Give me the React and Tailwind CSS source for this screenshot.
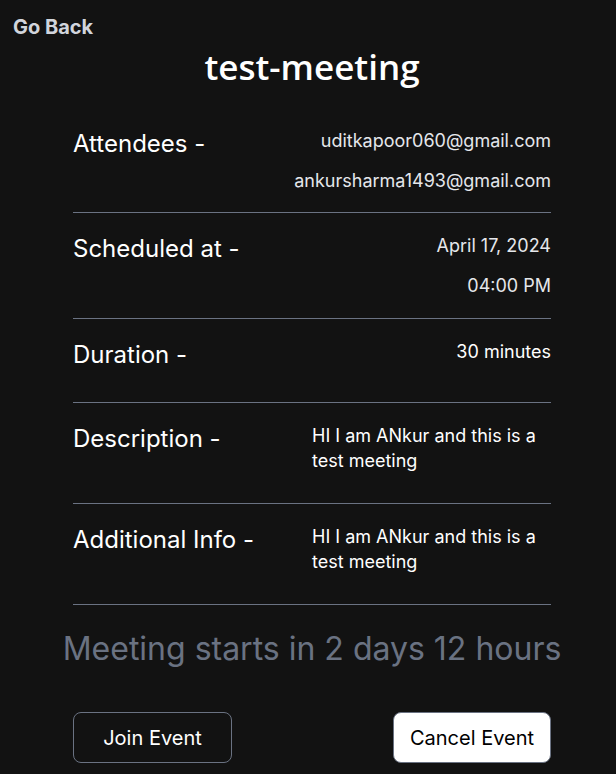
import React from 'react';

const rows = [
  {
    label: 'Attendees -',
    values: ['uditkapoor060@gmail.com', 'ankursharma1493@gmail.com'],
    tone: 'text-gray-200',
    pb: 'pb-[19px]',
  },
  {
    label: 'Scheduled at -',
    values: ['April 17, 2024', '04:00 PM'],
    tone: 'text-gray-200',
    pb: 'pb-[20px]',
  },
  {
    label: 'Duration -',
    values: ['30 minutes'],
    tone: 'text-white',
    pb: 'pb-[31px]',
  },
];

const notes = [
  { label: 'Description -', text: 'HI I am ANkur and this is a test meeting' },
  { label: 'Additional Info -', text: 'HI I am ANkur and this is a test meeting' },
];

function ListRow({ label, values, tone, pb }) {
  return (
    <div className={`flex justify-between border-b border-gray-500 pt-5 ${pb}`}>
      <p className="text-2xl leading-8">{label}</p>
      <div className={`flex flex-col items-end gap-[15px] text-lg leading-[25px] ${tone}`}>
        {values.map(v => (
          <p key={v}>{v}</p>
        ))}
      </div>
    </div>
  );
}

function NoteRow({ label, text }) {
  return (
    <div className="flex justify-between border-b border-gray-500 pt-5 pb-[30px]">
      <p className="text-2xl leading-8">{label}</p>
      <p className="w-[239px] text-lg leading-[25px]">{text}</p>
    </div>
  );
}

export default function App() {
  return (
    <div className="min-h-screen bg-[#121212] text-white font-['Inter',sans-serif]">
      <div className="pl-[13px] pt-[15px]">
        <button className="text-xl leading-6 font-bold text-gray-300">Go Back</button>
      </div>
      <div className="pl-2">
        <h1 className="mt-[5px] mb-[19px] text-center text-[35px] leading-[44px] font-semibold font-['Open_Sans',sans-serif]">
          test-meeting
        </h1>
        <div className="w-[478px] mx-auto">
          {rows.map(r => (
            <ListRow key={r.label} {...r} />
          ))}
          {notes.map(n => (
            <NoteRow key={n.label} {...n} />
          ))}
        </div>
        <p className="mt-6 text-center text-[32px] leading-10 text-gray-500">
          Meeting starts in 2 days 12 hours
        </p>
        <div className="w-[478px] mx-auto flex justify-between mt-[43px]">
          <button className="w-[159px] h-[51px] rounded-lg border border-gray-500 text-xl">Join Event</button>
          <button className="w-[158px] h-[51px] rounded-lg border border-gray-500 bg-white text-black text-xl">
            Cancel Event
          </button>
        </div>
      </div>
    </div>
  );
}
